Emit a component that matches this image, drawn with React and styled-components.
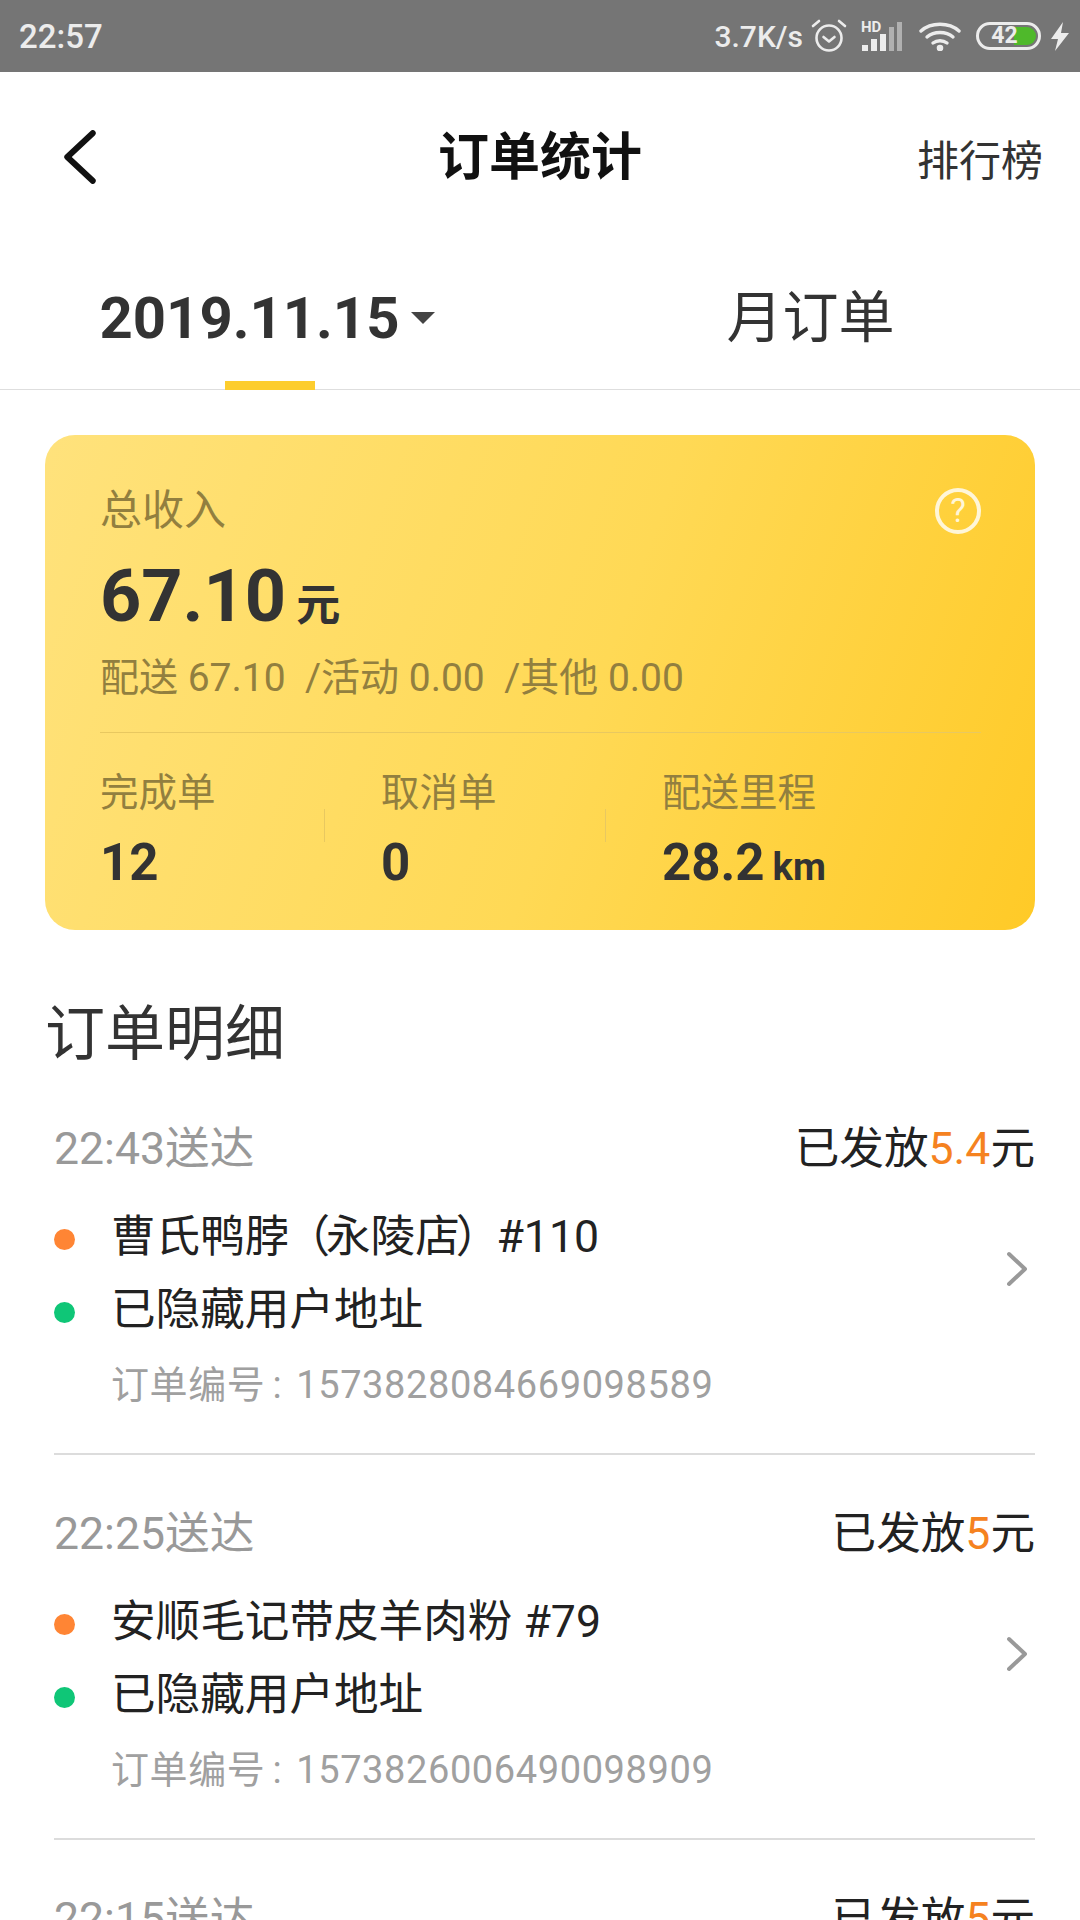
import styled, { createGlobalStyle } from "styled-components"

const GlobalStyle = createGlobalStyle`
    html, body {
        margin: 0;
        padding: 0;
        background: #fff;
    }
    * {
        box-sizing: border-box;
    }
`
const Page = styled.div`
    width: 1080px;
    height: 1920px;
    overflow: hidden;
    background: #fff;
    font-family: Roboto, "Noto Sans CJK SC", sans-serif;
`
const StatusBar = styled.div`
    height: 72px;
    background: #757575;
    color: #ececec;
    display: flex;
    align-items: center;
    padding: 0 11px 0 19px;
`
const Clock = styled.span`
    font-size: 33px;
    font-weight: 500;
    margin-right: auto;
`
const Speed = styled.span`
    font-size: 30px;
    font-weight: 500;
    margin-right: 8px;
`
const Battery = styled.div`
    position: relative;
    width: 65px;
    height: 28px;
    margin: 0 10px 0 15px;
    border: 3px solid #ececec;
    border-radius: 14px;
    font-size: 23px;
    font-weight: 700;
    line-height: 22px;
    text-align: center;
`
const BatteryFill = styled.div`
    position: absolute;
    top: 2px;
    right: 2px;
    width: 22px;
    height: 18px;
    background: #4fb92b;
    border-radius: 0 9px 9px 0;
`
const BatteryLabel = styled.span`
    position: relative;
    margin-left: -8px;
`
const NavBar = styled.div`
    height: 168px;
    display: flex;
    align-items: center;
    justify-content: space-between;
    padding: 2px 37px 0 64px;
    position: relative;
`
const NavTitle = styled.div`
    position: absolute;
    left: 0;
    right: 0;
    padding-bottom: 8px;
    text-align: center;
    font-size: 51px;
    font-weight: 700;
    color: #111;
    pointer-events: none;
`
const NavAction = styled.div`
    font-size: 42px;
    color: #333;
`
const Tabs = styled.div`
    height: 150px;
    display: flex;
    border-bottom: 1px solid #dedede;
`
const Tab = styled.div`
    position: relative;
    flex: 1;
    display: flex;
    align-items: center;
    justify-content: center;
    padding: ${props => props.$active ? "6px 8px 0 0" : "0 2px 4px 0"};
    color: #333;
    font-size: ${props => props.$active ? "58px" : "56px"};
    font-weight: ${props => props.$active ? 700 : 400};
    ${props => props.$active && `
        &::after {
            content: "";
            position: absolute;
            left: 225px;
            bottom: -1px;
            width: 90px;
            height: 9px;
            background: #fdcd2e;
        }
    `}
`
const Caret = styled.span`
    width: 0;
    height: 0;
    margin: 0 0 0 12px;
    border-left: 12px solid transparent;
    border-right: 12px solid transparent;
    border-top: 12px solid #444;
`
const Card = styled.section`
    margin: 45px 45px 0;
    height: 495px;
    padding: 46px 54px 0 55px;
    border-radius: 30px;
    background: linear-gradient(110deg, #ffe27c 0%, #ffd955 55%, #ffca27 100%);
`
const CardHead = styled.div`
    display: flex;
    justify-content: space-between;
    align-items: center;
    height: 60px;
`
const CardLabel = styled.div`
    font-size: ${props => props.$size || "38.5px"};
    line-height: 60px;
    color: #927f3f;
`
const HelpIcon = styled.div`
    width: 46px;
    height: 46px;
    border: 4px solid #fff6d8;
    border-radius: 50%;
    color: #fff6d8;
    font-size: 33px;
    line-height: 38px;
    text-align: center;
`
const Amount = styled.div`
    height: 101px;
    margin-top: 6px;
    display: flex;
    align-items: baseline;
    color: #333;
    font-size: 72px;
    font-weight: 700;
    line-height: 100px;
`
const Unit = styled.span`
    font-size: ${props => props.$size || "44px"};
    font-weight: ${props => props.$weight || 700};
    margin-left: ${props => props.$gap || "10px"};
`
const Breakdown = styled.div`
    height: 60px;
    font-size: 39px;
    line-height: 60px;
    color: #927f3f;
    white-space: pre;
`
const CardDivider = styled.div`
    height: 1px;
    margin-top: 24px;
    background: #e8c860;
`
const Stats = styled.div`
    display: flex;
    margin-top: 30px;
`
const Stat = styled.div`
    position: relative;
    width: 281px;
    ${props => props.$divided && `
        &::after {
            content: "";
            position: absolute;
            left: 224px;
            top: 46px;
            width: 1px;
            height: 33px;
            background: #e8c860;
        }
    `}
`
const StatValue = styled.div`
    font-size: 51px;
    font-weight: 700;
    line-height: 70px;
    color: #333;
    margin-top: 5px;
`
const SectionTitle = styled.h2`
    margin: 0;
    height: 140px;
    padding: 72px 0 0 45px;
    font-size: 60px;
    font-weight: 400;
    line-height: 66px;
    color: #333;
`
const OrderRow = styled.div`
    margin: 0 45px 0 54px;
    height: 385px;
    padding-top: 49px;
    border-bottom: 2px solid #dcdcdc;
`
const OrderHead = styled.div`
    display: flex;
    justify-content: space-between;
    height: 60px;
    line-height: 60px;
    font-size: 44.6px;
`
const OrderTime = styled.span`
    color: #999;
`
const OrderPaid = styled.span`
    color: #222;
`
const Money = styled.span`
    color: #f58220;
`
const OrderBody = styled.div`
    display: flex;
    align-items: center;
    justify-content: space-between;
    margin-top: 23px;
    padding-right: 8px;
`
const Stops = styled.div`
    display: flex;
    flex-direction: column;
    gap: 13px;
`
const Stop = styled.div`
    display: flex;
    align-items: center;
    gap: 36px;
    height: 60px;
    font-size: 44.6px;
    color: #222;
`
const Dot = styled.span`
    width: 21px;
    height: 21px;
    margin-top: 14px;
    border-radius: 50%;
    background: ${props => props.$color};
`
const Paren = styled.span`
    margin: 0 -4px;
`
const OrderNo = styled.div`
    margin: 25px 0 0 57px;
    font-size: 38px;
    line-height: 50px;
    color: #a0a0a0;
    letter-spacing: 0.6px;
`
const Colon = styled.span`
    margin: 0 14px 0 7px;
`

const orders = [
    { time: "22:43送达", money: "5.4", store: <span>曹氏鸭脖<Paren>（</Paren>永陵店<Paren>）</Paren>#110</span>, no: "1573828084669098589" },
    { time: "22:25送达", money: "5", store: "安顺毛记带皮羊肉粉 #79", no: "1573826006490098909" },
    { time: "22:15送达", money: "5", store: "", no: "" },
]

function AlarmIcon() {
    return (
        <svg width="36" height="34" viewBox="0 0 36 34" fill="none" stroke="#ececec" strokeWidth="2.6" strokeLinecap="round" strokeLinejoin="round">
            <circle cx="18" cy="19" r="12.5" />
            <path d="M12.5 18l5.5 4.5 5.5-4.5" />
            <path d="M2 7l6-5M34 7l-6-5" />
        </svg>
    )
}

function SignalIcon() {
    return (
        <svg width="42" height="32" viewBox="0 0 42 32" style={{ marginLeft: 14 }}>
            <text x="0" y="12" fontSize="15" fontWeight="700" fill="#ececec" fontFamily="Roboto, sans-serif">HD</text>
            <rect x="1" y="25" width="6" height="6" fill="#ececec" />
            <rect x="10" y="19" width="6" height="12" fill="#ececec" />
            <rect x="19" y="14" width="6" height="17" fill="#ececec" />
            <rect x="28" y="7" width="5" height="24" fill="#b0b0b0" />
            <rect x="36" y="2" width="5" height="29" fill="#b0b0b0" />
        </svg>
    )
}

function WifiIcon() {
    return (
        <svg width="42" height="30" viewBox="0 0 42 30" fill="none" stroke="#ececec" strokeWidth="3.4" strokeLinecap="round" style={{ marginLeft: 16 }}>
            <path d="M2 10C12 1 30 1 40 10" />
            <path d="M8 16C15 10 27 10 34 16" />
            <path d="M14 22C18 19 24 19 28 22" />
            <circle cx="21" cy="27" r="1.6" fill="#ececec" />
        </svg>
    )
}

function BoltIcon() {
    return (
        <svg width="18" height="29" viewBox="0 0 18 29">
            <path d="M12 0L0 17h7l-3 12L18 11h-8z" fill="#ececec" />
        </svg>
    )
}

function Chevron({ left, color, width, height, stroke }) {
    return (
        <svg width={width} height={height} viewBox="0 0 20 34" fill="none" stroke={color} strokeWidth={stroke} strokeLinecap="round" strokeLinejoin="round">
            <path d={left ? "M18 2L2 17l16 15" : "M2 2l16 15L2 32"} />
        </svg>
    )
}

function Order({ order }) {
    return (
        <OrderRow>
            <OrderHead>
                <OrderTime>{order.time}</OrderTime>
                <OrderPaid>已发放<Money>{order.money}</Money>元</OrderPaid>
            </OrderHead>
            {order.store && (
                <>
                    <OrderBody>
                        <Stops>
                            <Stop><Dot $color="#ff8534" />{order.store}</Stop>
                            <Stop><Dot $color="#0fc677" />已隐藏用户地址</Stop>
                        </Stops>
                        <Chevron color="#999" width={20} height={36} stroke={4} />
                    </OrderBody>
                    <OrderNo>订单编号<Colon>:</Colon>{order.no}</OrderNo>
                </>
            )}
        </OrderRow>
    )
}

export default function App() {
    return (
        <Page>
            <GlobalStyle />
            <StatusBar>
                <Clock>22:57</Clock>
                <Speed>3.7K/s</Speed>
                <AlarmIcon />
                <SignalIcon />
                <WifiIcon />
                <Battery>
                    <BatteryFill />
                    <BatteryLabel>42</BatteryLabel>
                </Battery>
                <BoltIcon />
            </StatusBar>
            <NavBar>
                <Chevron left color="#111" width={32} height={54} stroke={3.8} />
                <NavTitle>订单统计</NavTitle>
                <NavAction>排行榜</NavAction>
            </NavBar>
            <Tabs>
                <Tab $active>2019.11.15<Caret /></Tab>
                <Tab>月订单</Tab>
            </Tabs>
            <Card>
                <CardHead>
                    <CardLabel $size="42px">总收入</CardLabel>
                    <HelpIcon>?</HelpIcon>
                </CardHead>
                <Amount>67.10<Unit>元</Unit></Amount>
                <Breakdown>配送 67.10  /活动 0.00  /其他 0.00</Breakdown>
                <CardDivider />
                <Stats>
                    <Stat $divided>
                        <CardLabel>完成单</CardLabel>
                        <StatValue>12</StatValue>
                    </Stat>
                    <Stat $divided>
                        <CardLabel>取消单</CardLabel>
                        <StatValue>0</StatValue>
                    </Stat>
                    <Stat>
                        <CardLabel>配送里程</CardLabel>
                        <StatValue>28.2<Unit $size="38px" $gap="8px">km</Unit></StatValue>
                    </Stat>
                </Stats>
            </Card>
            <SectionTitle>订单明细</SectionTitle>
            {orders.map(order => <Order key={order.time} order={order} />)}
        </Page>
    )
}
